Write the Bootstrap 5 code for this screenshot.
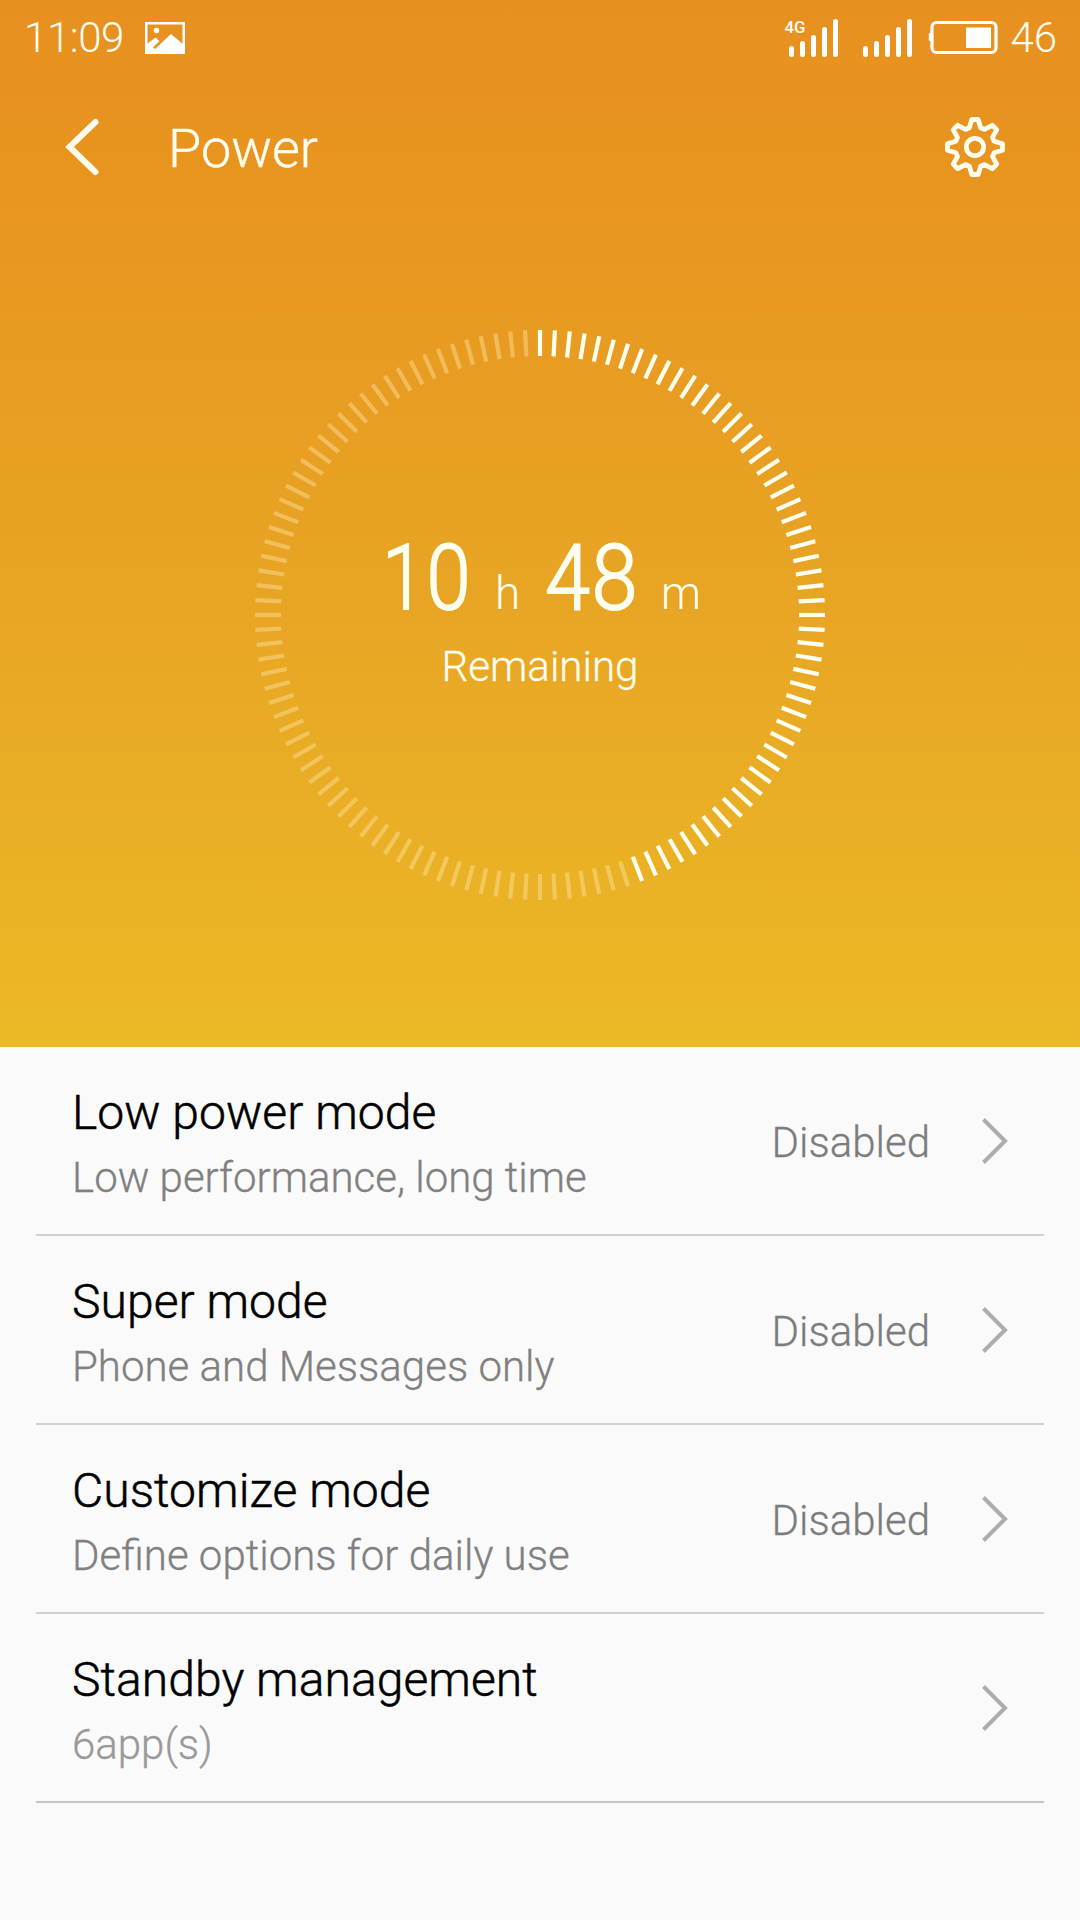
<!DOCTYPE html>
<html lang="en">
<head>
<meta charset="utf-8">
<meta name="viewport" content="width=device-width, initial-scale=1">
<title>Power</title>
<link href="https://cdn.jsdelivr.net/npm/bootstrap@5.3.0/dist/css/bootstrap.min.css" rel="stylesheet">
<style>
  body { font-family: Roboto, "Liberation Sans", sans-serif; font-weight: 300; background: #fafafa; color: #000; }
  .phone { width: 1080px; height: 1920px; overflow: hidden; }
  .hero { height: 1047px; background: linear-gradient(#e79020 0, #e8951f 180px, #e8a524 600px, #ebb926 1047px); color: #fffdf0; }
  .statusbar { height: 76px; padding: 0 23px 0 24px; font-size: 42px; line-height: 74px; }
  .clock-text { width: 101px; letter-spacing: -.4px; }
  .photo-icon { margin-left: 20px; }
  .level-text { margin-left: 11px; margin-bottom: 1px; }
  .appbar { height: 142px; padding: 0 70px 0 61px; }
  .page-title { font-size: 54px; line-height: 60px; font-weight: 300; margin: 4px 0 0 63px; -webkit-text-stroke: .4px; }
  .dial { display: block; margin: 102px auto 0; }
  .mode-item { height: 189px; margin: 0 36px; padding: 0 35px 0 36px; border-bottom: 2px solid #d0d0d0; }
  .mode-item:last-child { border-color: #c6c6c6; }
  .mode-label { padding-top: 6px; }
  .mode-name { font-size: 48px; line-height: 68px; letter-spacing: .06px; -webkit-text-stroke: .5px; }
  .mode-note { font-size: 42px; line-height: 62px; color: #808080; -webkit-text-stroke: .3px; }
  .mode-note.pale { color: #999; }
  .mode-state { font-size: 42px; line-height: 62px; color: #7c7c7c; margin: 4px 49px 0 0; -webkit-text-stroke: .3px; }
  svg { flex: none; }
</style>
</head>
<body>
<main class="phone">
  <section class="hero">
    <div class="statusbar d-flex align-items-center">
      <span class="clock-text">11:09</span>
      <svg class="photo-icon" width="40" height="32" viewBox="0 0 40 32">
        <rect x="1.250" y="1.250" width="37.500" height="29.500" fill="none" stroke="#fff" stroke-width="2.500"/>
        <circle cx="11.500" cy="8.500" r="2.700" fill="#fff"/>
        <path fill="#fff" d="M2 30V22L10.500 15.500L14.500 19L8 25.500L10 27L26 12L39 23V30Z"/>
      </svg>
      <svg class="ms-auto" width="215" height="44" viewBox="0 0 215 44" fill="none" stroke="#fff" stroke-linecap="round">
        <g stroke-width="5">
          <path d="M7.500 32.500v6M18.500 27.500v11M29.500 21.500v17M40.500 13.500v25M51.500 5.500v33"/>
          <path d="M81.500 32.500v6M92.500 27.500v11M103.500 21.500v17M114.500 13.500v25M125.500 5.500v33"/>
        </g>
        <text x="0.500" y="16.500" font-family="Roboto, sans-serif" font-weight="500" font-size="16.500" textLength="21" lengthAdjust="spacingAndGlyphs" fill="#fff" stroke="none">4G</text>
        <rect x="148" y="6.500" width="64" height="30" rx="4.500" stroke-width="3.200"/>
        <path d="M146.500 18.500v5" stroke-width="3.500"/>
        <rect x="182" y="11.500" width="25" height="20.500" fill="#fff" stroke="none"/>
      </svg>
      <span class="level-text">46</span>
    </div>
    <header class="appbar d-flex align-items-center">
      <svg width="44" height="60" viewBox="0 0 44 60" fill="none" stroke="#fffdf0" stroke-width="6" stroke-linecap="round"><path d="M34.500 5L8.500 30L34.500 55"/></svg>
      <h1 class="page-title">Power</h1>
      <svg class="ms-auto" width="70" height="70" viewBox="-35 -35 70 70" fill="none" stroke="#fffdf0" stroke-width="4.800" stroke-linejoin="round">
        <circle r="8.700"/>
        <path id="cog"/>
      </svg>
    </header>
    <svg class="dial" width="590" height="590" viewBox="-295 -295 590 590" fill="#fffff0" font-family="Roboto, sans-serif">
      <g id="ticks" stroke-width="4.200"></g>
      <g font-size="90" font-weight="300" stroke="#fffff0" stroke-width="1.800">
        <text y="-6"><tspan x="-158" textLength="43" lengthAdjust="spacingAndGlyphs">1</tspan><tspan x="-113.500" textLength="44" lengthAdjust="spacingAndGlyphs">0</tspan></text>
        <text y="-6"><tspan x="5" textLength="45" lengthAdjust="spacingAndGlyphs">4</tspan><tspan x="51.500" textLength="46" lengthAdjust="spacingAndGlyphs">8</tspan></text>
      </g>
      <g font-size="46" font-weight="300">
        <text x="-45" y="-6">h</text>
        <text x="121" y="-6" textLength="40" lengthAdjust="spacingAndGlyphs">m</text>
      </g>
      <text x="-98.500" y="66" font-size="43" font-weight="300" stroke="#fffff0" stroke-width=".3" textLength="197" lengthAdjust="spacingAndGlyphs">Remaining</text>
    </svg>
  </section>

  <section>
    <div class="mode-item d-flex align-items-center">
      <div class="mode-label flex-grow-1"><div class="mode-name">Low power mode</div><div class="mode-note">Low performance, long time</div></div>
      <span class="mode-state">Disabled</span>
      <svg width="30" height="50" viewBox="0 0 30 50" fill="none" stroke="#adadad" stroke-width="4"><path d="M4.500 3.500L26 25L4.500 46.500"/></svg>
    </div>
    <div class="mode-item d-flex align-items-center">
      <div class="mode-label flex-grow-1"><div class="mode-name">Super mode</div><div class="mode-note">Phone and Messages only</div></div>
      <span class="mode-state">Disabled</span>
      <svg width="30" height="50" viewBox="0 0 30 50" fill="none" stroke="#adadad" stroke-width="4"><path d="M4.500 3.500L26 25L4.500 46.500"/></svg>
    </div>
    <div class="mode-item d-flex align-items-center">
      <div class="mode-label flex-grow-1"><div class="mode-name">Customize mode</div><div class="mode-note">Define options for daily use</div></div>
      <span class="mode-state">Disabled</span>
      <svg width="30" height="50" viewBox="0 0 30 50" fill="none" stroke="#adadad" stroke-width="4"><path d="M4.500 3.500L26 25L4.500 46.500"/></svg>
    </div>
    <div class="mode-item d-flex align-items-center">
      <div class="mode-label flex-grow-1"><div class="mode-name">Standby management</div><div class="mode-note pale">6app(s)</div></div>
      <svg width="30" height="50" viewBox="0 0 30 50" fill="none" stroke="#adadad" stroke-width="4"><path d="M4.500 3.500L26 25L4.500 46.500"/></svg>
    </div>
  </section>
</main>
<script src="https://cdn.jsdelivr.net/npm/bootstrap@5.3.0/dist/js/bootstrap.bundle.min.js"></script>
<script>
  // Battery dial: 120 ticks, the first 54 lit
  const ticks = document.getElementById('ticks');
  for (let i = 0; i < 120; i++) {
    const t = document.createElementNS('http://www.w3.org/2000/svg', 'path');
    t.setAttribute('d', 'M0-285V-259');
    t.setAttribute('transform', `rotate(${i * 3})`);
    t.setAttribute('stroke', i < 54 ? '#fffff0' : 'rgba(255,232,170,.42)');
    ticks.appendChild(t);
  }
  // Eight-tooth cog outline
  const pt = (r, deg) => {
    const a = deg * Math.PI / 180;
    return (r * Math.sin(a)).toFixed(2) + ' ' + (-r * Math.cos(a)).toFixed(2);
  };
  const pts = [];
  for (let k = 0; k < 8; k++) {
    const c = k * 45;
    pts.push(pt(27.7, c - 6.5), pt(27.7, c + 6.5), pt(20, c + 16.5), pt(20, c + 28.5));
  }
  document.getElementById('cog').setAttribute('d', 'M' + pts.join('L') + 'Z');
</script>
</body>
</html>
